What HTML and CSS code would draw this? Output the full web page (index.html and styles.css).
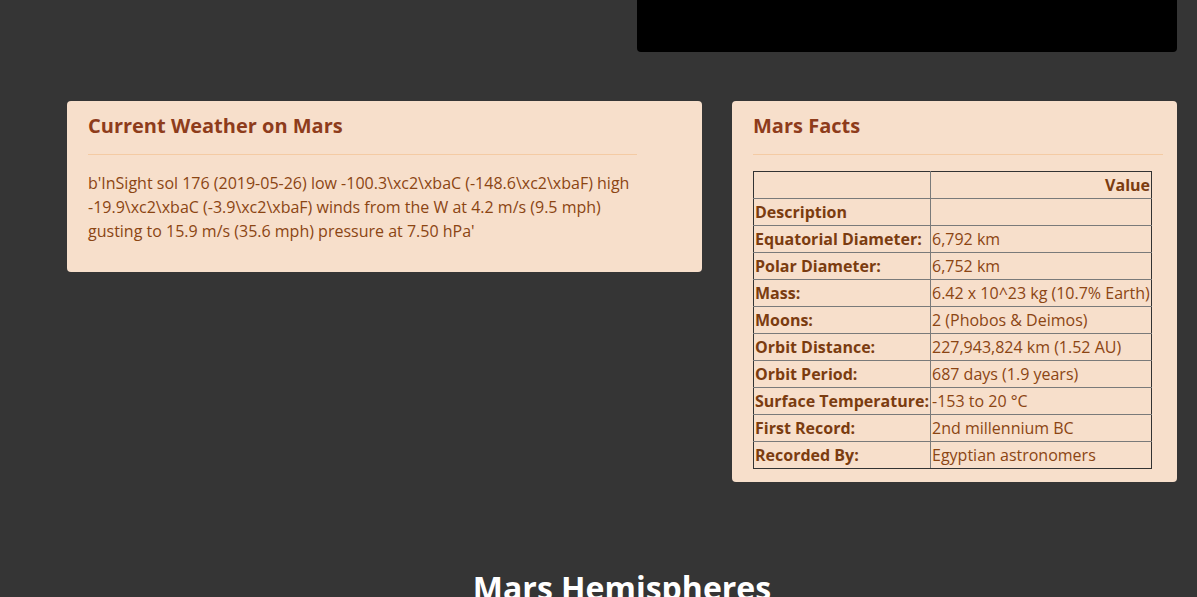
FILE: index.html
```html
<!DOCTYPE html>
<html lang="en">
<head>
<meta charset="utf-8">
<title>Mission to Mars</title>
<link rel="stylesheet" href="styles.css">
</head>
<body>
<div class="container">
  <div class="top-row">
    <div class="featured-image"></div>
  </div>
  <div class="cards-row">
    <section class="card card-weather">
      <h4 class="card-title">Current Weather on Mars</h4>
      <hr class="rule rule-weather">
      <p class="weather-text">b'InSight sol 176 (2019-05-26) low -100.3\xc2\xbaC (-148.6\xc2\xbaF) high -19.9\xc2\xbaC (-3.9\xc2\xbaF) winds from the W at 4.2 m/s (9.5 mph) gusting to 15.9 m/s (35.6 mph) pressure at 7.50 hPa'</p>
    </section>
    <section class="card card-facts">
      <h4 class="card-title">Mars Facts</h4>
      <hr class="rule rule-facts">
      <table class="facts-table">
        <thead>
          <tr class="head-row"><th class="col-label"></th><th class="col-value">Value</th></tr>
          <tr><th>Description</th><th></th></tr>
        </thead>
        <tbody>
          <tr><th>Equatorial Diameter:</th><td>6,792 km</td></tr>
          <tr><th>Polar Diameter:</th><td>6,752 km</td></tr>
          <tr><th>Mass:</th><td>6.42 x 10^23 kg (10.7% Earth)</td></tr>
          <tr><th>Moons:</th><td>2 (Phobos &amp; Deimos)</td></tr>
          <tr><th>Orbit Distance:</th><td>227,943,824 km (1.52 AU)</td></tr>
          <tr><th>Orbit Period:</th><td>687 days (1.9 years)</td></tr>
          <tr><th>Surface Temperature:</th><td>-153 to 20 °C</td></tr>
          <tr><th>First Record:</th><td>2nd millennium BC</td></tr>
          <tr><th>Recorded By:</th><td>Egyptian astronomers</td></tr>
        </tbody>
      </table>
    </section>
  </div>
  <h2 class="section-title">Mars Hemispheres</h2>
</div>
</body>
</html>
```

FILE: styles.css
```css
html, body {
  margin: 0;
  padding: 0;
}
body {
  background: #353535;
  font-family: "Open Sans", "Liberation Sans", sans-serif;
  color: #8b4513;
  overflow: hidden;
}
.container {
  width: 1110px;
  margin-left: 67px;
}
.top-row {
  display: flex;
  justify-content: flex-end;
}
.featured-image {
  width: 540px;
  height: 52px;
  background: #000;
  border-radius: 0 0 4px 4px;
}
.cards-row {
  display: flex;
  align-items: flex-start;
  gap: 30px;
  margin-top: 49px;
}
.card {
  background: #f7dfcb;
  border-radius: 4px;
  padding: 13px 21px 13px;
  box-sizing: border-box;
}
.card-weather {
  width: 635px;
}
.card-facts {
  width: 445px;
}
.card-title {
  margin: 0;
  font-size: 20px;
  line-height: 24px;
  font-weight: 700;
  color: #8e3c1b;
}
.rule {
  border: 0;
  border-top: 1px solid #f4cba4;
  margin: 16px 0 16px;
  height: 0;
}
.rule-weather {
  width: 549px;
}
.rule-facts {
  width: 410px;
}
.weather-text {
  margin: 0 0 16px;
  width: 549px;
  font-size: 16px;
  line-height: 24px;
  color: #8b4513;
}
.facts-table {
  border-collapse: collapse;
  border: 1px solid #333;
  width: 399px;
  font-size: 16px;
  line-height: 26px;
  color: #8b4513;
}
.facts-table th,
.facts-table td {
  border: 1px solid #7a7a7a;
  padding: 0 1px;
  text-align: left;
  white-space: nowrap;
}
.facts-table tr > :first-child {
  border-left-color: #333;
}
.facts-table tr > :last-child {
  border-right-color: #333;
}
.facts-table .head-row > * {
  border-top-color: #333;
}
.facts-table tbody tr:last-child > * {
  border-bottom-color: #333;
}
.facts-table th {
  font-weight: 700;
  color: #7b3c10;
}
.facts-table .col-label {
  width: 174px;
}
.facts-table .head-row th {
  text-align: right;
}
.section-title {
  margin: 87px 0 0;
  text-align: center;
  color: #fff;
  font-size: 32px;
  line-height: 38px;
  font-weight: 700;
}
```
